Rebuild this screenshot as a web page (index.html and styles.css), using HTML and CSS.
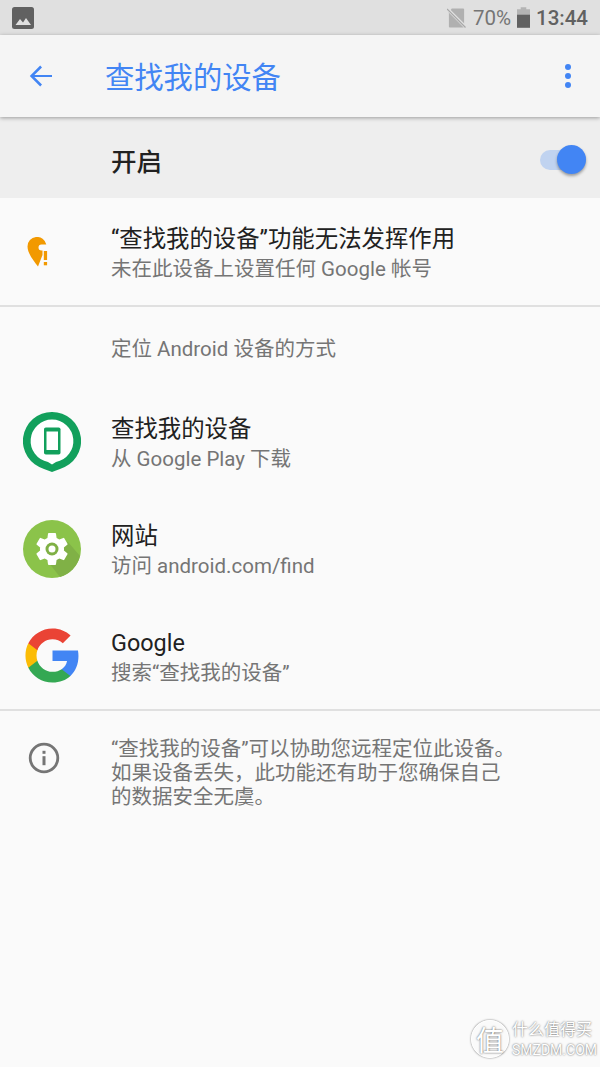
FILE: index.html
```html
<!DOCTYPE html>
<html>
<head>
  <meta charset="utf-8">
  <meta name="viewport" content="width=device-width, initial-scale=1">
  <title>查找我的设备</title>
  <link rel="stylesheet" href="styles.css">
</head>
<body>
  <main>
    <header class="status-bar">
      <svg class="status-picture" viewBox="0 0 22 22"><rect width="22" height="22" rx="2.5" fill="#616161"/><path d="M3.5 18l4.5-6 3 3.6 3-4.600 5 7z" fill="#e0e0e0"/></svg>
      <div class="status-right">
        <svg class="status-sim" viewBox="0 0 20 20"><path d="M2 4l3-4h12a1 1 0 0 1 1 1v18a1 1 0 0 1-1 1H3a1 1 0 0 1-1-1z" fill="#b0b0b0"/><path d="M0 0l20 20" stroke="#e0e0e0" stroke-width="3.400"/><path d="M0 0.500l19.500 19.500" stroke="#a8a8a8" stroke-width="1.300"/></svg>
        <span class="status-pct">70%</span>
        <svg class="status-battery" viewBox="0 0 14 22"><path d="M4 0h6v2h4v20H0V2h4z" fill="#b4b4b4"/><rect y="8" width="14" height="14" fill="#616161"/></svg>
        <span class="status-time">13:44</span>
      </div>
    </header>

    <div class="toolbar">
      <svg class="back" viewBox="0 0 24 24"><path d="M23 11H5.400l7.600-7.600L11.200 1.600 .8 12l10.400 10.400 1.800-1.800L5.400 13H23z" fill="#4285f4"/></svg>
      <h1>查找我的设备</h1>
      <div class="more"><i></i><i></i><i></i></div>
    </div>

    <div class="switch-row">
      <span class="switch-label">开启</span>
      <div class="switch"><div class="switch-thumb"></div></div>
    </div>

    <section class="row warn-row">
      <div class="row-icon">
        <svg class="warn-icon" viewBox="0 0 22 30"><path d="M11 29.500C6 23 .5 16 .5 9.500A9.500 9.500 0 0 1 19.300 7.500H14.500A3 3 0 1 0 14.500 13.500H15.500V18z" fill="#f29900"/><rect x="16.800" y="14" width="3.300" height="9" fill="#f29900"/><rect x="16.800" y="25" width="3.300" height="3.300" fill="#f29900"/></svg>
      </div>
      <div class="row-text">
        <div class="row-title">“查找我的设备”功能无法发挥作用</div>
        <div class="row-sub">未在此设备上设置任何 Google 帐号</div>
      </div>
    </section>

    <section class="ways">
      <div class="ways-head">定位 Android 设备的方式</div>

      <div class="row">
        <div class="row-icon">
          <svg class="app-icon" viewBox="0 0 58 60"><path d="M29 0a29 29 0 0 1 8 56.900L29 60l-8-3.100A29 29 0 0 1 29 0z" fill="#12a05c"/><path d="M29 7.500a21.500 21.500 0 0 1 4 42.600L29 52.500l-4-2.400A21.500 21.500 0 0 1 29 7.500z" fill="#fff"/><rect x="21" y="15.500" width="16.500" height="27" rx="1.800" fill="#12a05c"/><rect x="23.500" y="19.500" width="11.500" height="18.500" fill="#fff"/></svg>
        </div>
        <div class="row-text">
          <div class="row-title">查找我的设备</div>
          <div class="row-sub">从 Google Play 下载</div>
        </div>
      </div>

      <div class="row">
        <div class="row-icon">
          <svg class="app-icon" viewBox="0 0 58 58"><circle cx="29" cy="29" r="29" fill="#8bc34a"/><path d="M29 29l-7 9 15 19a29 29 0 0 0 20-21L45 22z" fill="#80b146"/><svg x="9" y="9" width="40" height="40" viewBox="0 0 24 24"><path d="M19.140 12.940c.04-.3.06-.61.06-.94s-.02-.64-.07-.94l2.030-1.580a.5.5 0 0 0 .12-.61l-1.920-3.320a.49.49 0 0 0-.59-.22l-2.390.96a7 7 0 0 0-1.620-.94l-.36-2.540a.48.48 0 0 0-.48-.41h-3.840a.47.47 0 0 0-.47.41l-.36 2.540c-.59.24-1.130.57-1.620.94l-2.390-.96a.49.49 0 0 0-.59.22L2.740 8.870a.48.48 0 0 0 .12.61l2.030 1.580c-.05.3-.09.63-.09.94s.02.64.07.94l-2.030 1.580a.5.5 0 0 0-.12.61l1.920 3.320c.12.22.37.29.59.22l2.390-.96c.5.38 1.030.7 1.620.94l.36 2.540c.05.24.24.41.48.41h3.840c.24 0 .44-.17.47-.41l.36-2.540a7 7 0 0 0 1.620-.94l2.390.96c.22.08.47 0 .59-.22l1.920-3.320a.48.48 0 0 0-.12-.61z" fill="#fff"/><circle cx="12" cy="12" r="3.900" fill="#7fb045"/><circle cx="12" cy="12" r="2.100" fill="#fff"/></svg></svg>
        </div>
        <div class="row-text">
          <div class="row-title">网站</div>
          <div class="row-sub">访问 android.com/find</div>
        </div>
      </div>

      <div class="row">
        <div class="row-icon">
          <svg class="google-icon" viewBox="0 0 48 48">
            <path d="M45.120 24.500c0-1.560-.14-3.060-.4-4.500H24v8.510h11.840c-.51 2.750-2.060 5.080-4.390 6.640v5.520h7.110c4.160-3.830 6.560-9.470 6.560-16.170z" fill="#4285f4"/>
            <path d="M24 46c5.940 0 10.920-1.970 14.560-5.330l-7.110-5.520c-1.970 1.320-4.490 2.100-7.450 2.100-5.730 0-10.580-3.870-12.310-9.070H4.340v5.700C7.960 41.070 15.400 46 24 46z" fill="#34a853"/>
            <path d="M11.690 28.180C11.250 26.860 11 25.450 11 24s.25-2.860.69-4.180v-5.700H4.340C2.850 17.090 2 20.450 2 24c0 3.550.85 6.910 2.340 9.880l7.350-5.700z" fill="#fbbc05"/>
            <path d="M24 10.750c3.230 0 6.130 1.110 8.410 3.290l6.310-6.310C34.910 4.180 29.930 2 24 2 15.400 2 7.960 6.930 4.340 14.120l7.350 5.700c1.730-5.200 6.580-9.070 12.310-9.070z" fill="#ea4335"/>
          </svg>
        </div>
        <div class="row-text">
          <div class="row-title">Google</div>
          <div class="row-sub">搜索“查找我的设备”</div>
        </div>
      </div>
    </section>

    <section class="info">
      <div class="info-icon">
        <svg viewBox="0 0 32 32" width="32" height="32"><circle cx="16" cy="16" r="13.800" fill="none" stroke="#757575" stroke-width="2.800"/><rect x="14.500" y="14.200" width="3" height="9" fill="#757575"/><rect x="14.500" y="8.800" width="3" height="3" fill="#757575"/></svg>
      </div>
      <p>“查找我的设备”可以协助您远程定位此设备。<br>如果设备丢失，此功能还有助于您确保自己<br>的数据安全无虞。</p>
    </section>

    <div class="watermark">
      <div class="watermark-seal">值</div>
      <div>
        <div class="watermark-name">什么值得买</div>
        <div class="watermark-url">SMZDM.COM</div>
      </div>
    </div>
  </main>
</body>
</html>
```

FILE: styles.css
```css
* {
  box-sizing: border-box;
}

body {
  margin: 0;
  background: #fafafa;
  font-family: 'Roboto', 'Noto Sans CJK SC', sans-serif;
}

main {
  width: 600px;
  height: 1067px;
  position: relative;
  overflow: hidden;
  display: flex;
  flex-direction: column;
}

.status-bar {
  height: 35px;
  background: #e0e0e0;
  display: flex;
  align-items: center;
  justify-content: space-between;
  padding: 0 12px;
}

.status-picture {
  width: 22px;
  height: 22px;
}

.status-right {
  display: flex;
  align-items: center;
}

.status-sim {
  width: 19px;
  height: 20px;
  margin-right: 7px;
}

.status-pct {
  font-size: 20.5px;
  color: #757575;
  margin-right: 6px;
}

.status-battery {
  width: 13px;
  height: 21px;
  margin-right: 6px;
}

.status-time {
  font-size: 20.5px;
  font-weight: 500;
  color: #616161;
}

.toolbar {
  height: 82px;
  background: #f5f5f5;
  display: flex;
  align-items: center;
  padding: 0 29px;
  position: relative;
  z-index: 1;
  box-shadow: 0 1px 4px rgba(0, 0, 0, 0.35);
}

.back {
  width: 24px;
  height: 24px;
  margin-right: 52px;
}

.toolbar h1 {
  flex-grow: 1;
  margin: 0 0 2px;
  font-size: 29.3px;
  font-weight: 400;
  color: #4285f4;
}

.more {
  display: flex;
  flex-direction: column;
  gap: 3px;
}

.more i {
  display: block;
  width: 6px;
  height: 6px;
  border-radius: 50%;
  background: #4285f4;
}

.switch-row {
  height: 81px;
  background: #eeeeee;
  display: flex;
  align-items: center;
  justify-content: space-between;
  padding: 4px 14px 0 111px;
}

.switch-label {
  font-size: 25.5px;
  font-weight: 500;
  color: #212121;
}

.switch {
  width: 46px;
  height: 20px;
  border-radius: 10px;
  background: #c0d3f0;
  position: relative;
}

.switch-thumb {
  position: absolute;
  right: 0;
  top: -5px;
  width: 29px;
  height: 29px;
  border-radius: 50%;
  background: #4285f4;
  box-shadow: 0 2px 3px rgba(0, 0, 0, 0.35);
}

.row {
  height: 107px;
  display: flex;
  align-items: center;
}

.warn-row {
  border-bottom: 2px solid #e0e0e0;
  height: 109px;
}

.row-icon {
  width: 111px;
  flex-shrink: 0;
  padding-left: 23px;
}

.row-text {
  margin-top: 4px;
}

.warn-icon {
  display: block;
  width: 22px;
  height: 30px;
  margin-left: 4px;
}

.app-icon {
  display: block;
  width: 58px;
  height: auto;
}

.google-icon {
  display: block;
  width: 59px;
  height: 59px;
}

.row-title {
  font-size: 23.4px;
  line-height: 30px;
  color: #212121;
}

.row-sub {
  font-size: 20.5px;
  line-height: 30px;
  color: #757575;
}

.ways {
  border-bottom: 2px solid #e0e0e0;
}

.ways-head {
  height: 81px;
  padding: 0 0 2px 111px;
  display: flex;
  align-items: center;
  font-size: 20.5px;
  color: #757575;
}

.info {
  display: flex;
  padding-top: 26px;
}

.info-icon {
  width: 111px;
  flex-shrink: 0;
  padding-left: 28px;
  padding-top: 5px;
}

.info p {
  margin: 0;
  font-size: 20.5px;
  line-height: 24px;
  color: #757575;
}

.watermark {
  position: absolute;
  right: 3px;
  bottom: 8px;
  display: flex;
  align-items: center;
  gap: 3px;
  color: #fff;
  text-shadow: 0 0 2px rgba(0, 0, 0, 0.7);
}

.watermark-seal {
  width: 38px;
  height: 38px;
  border: 1px solid #fff;
  border-radius: 50%;
  box-shadow: 0 0 2px rgba(0, 0, 0, 0.6);
  display: flex;
  align-items: center;
  justify-content: center;
  font-size: 28px;
}

.watermark-name {
  font-size: 16px;
  line-height: 22px;
}

.watermark-url {
  font-size: 14px;
  line-height: 18px;
}
```
